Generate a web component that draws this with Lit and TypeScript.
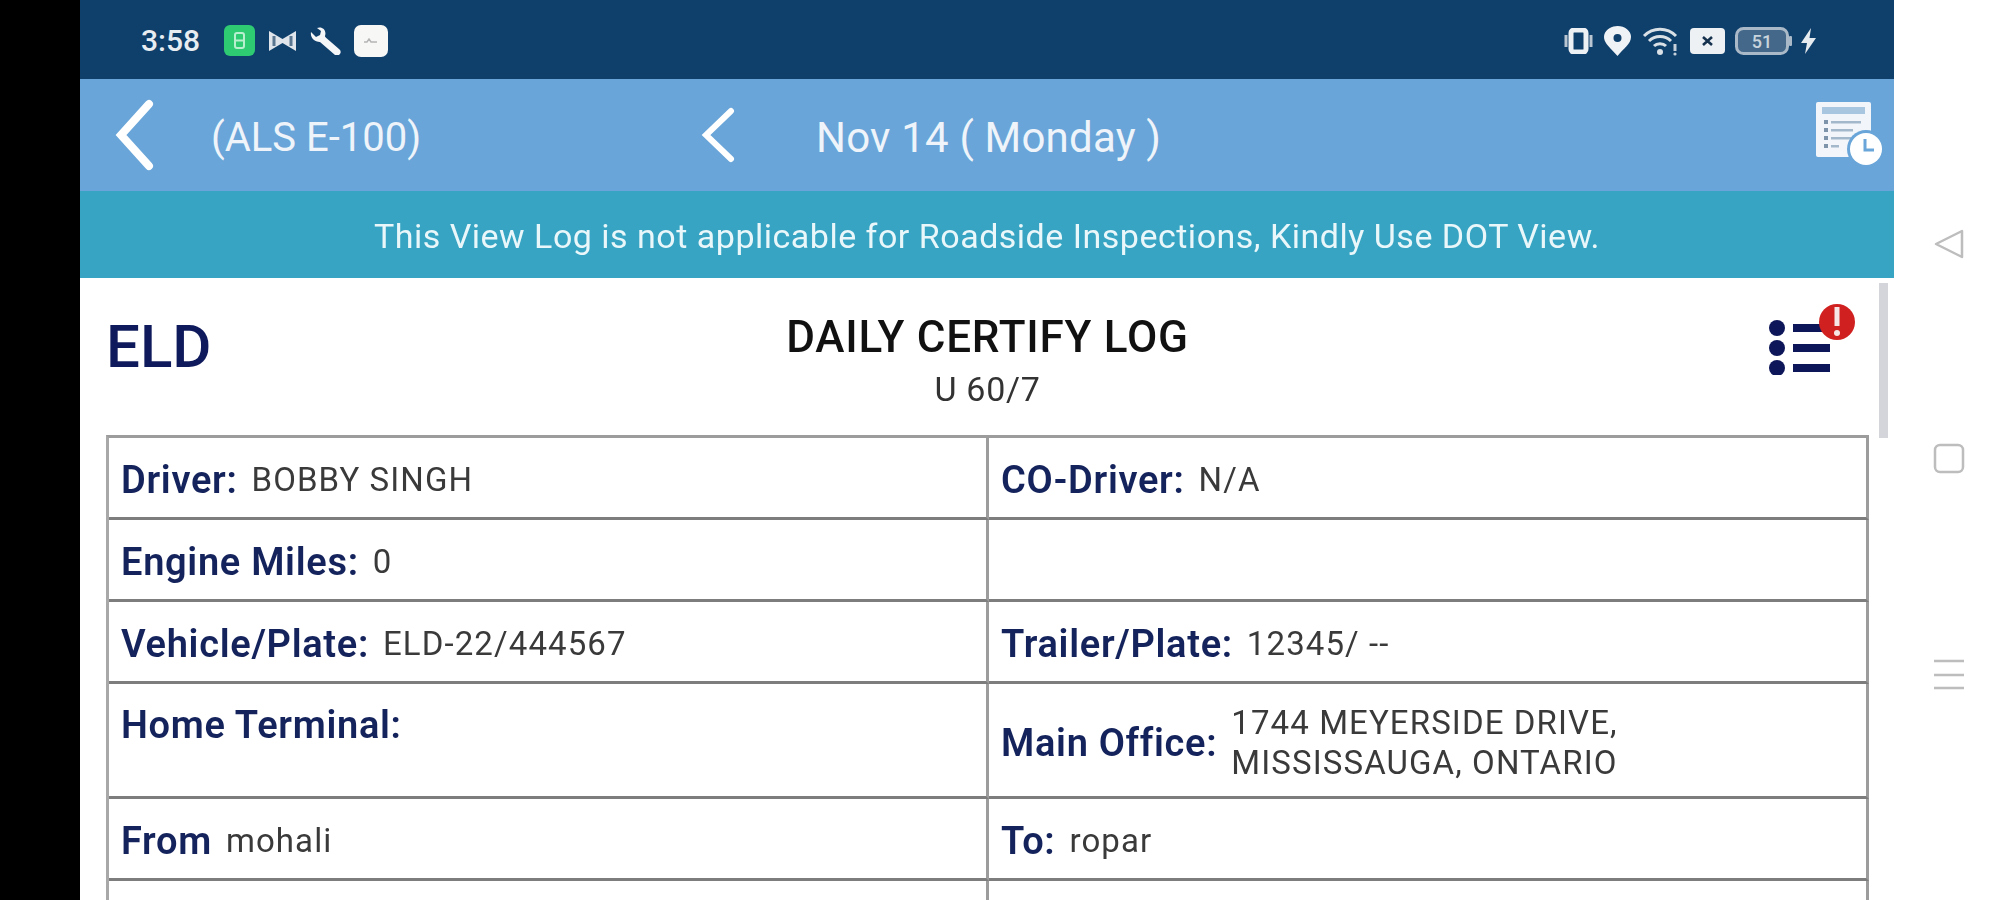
import { LitElement, html, css, svg } from 'lit';
import { customElement } from 'lit/decorators.js';

const chevron = (w: number, h: number, sw: number) => html`
  <svg width=${w} height=${h} viewBox="0 0 ${w} ${h}">
    <path d="M${w - sw / 2 - 1} ${sw / 2 + 1} L${sw} ${h / 2} L${w - sw / 2 - 1} ${h - sw / 2 - 1}"
      fill="none" stroke="#fff" stroke-width=${sw} stroke-linecap="round" stroke-linejoin="miter" />
  </svg>`;

const rows = [
  [{ k: 'Driver:', v: 'BOBBY SINGH' }, { k: 'CO-Driver:', v: 'N/A' }],
  [{ k: 'Engine Miles:', v: '0' }, null],
  [{ k: 'Vehicle/Plate:', v: 'ELD-22/444567' }, { k: 'Trailer/Plate:', v: '12345/ --' }],
  [{ k: 'Home Terminal:', v: '', top: true }, { k: 'Main Office:', v: '1744 MEYERSIDE DRIVE,\nMISSISSAUGA, ONTARIO' }],
  [{ k: 'From', v: 'mohali' }, { k: 'To:', v: 'ropar' }],
  [null, null],
];

@customElement('app-root')
export class AppRoot extends LitElement {
  static styles = css`
    :host {
      display: flex;
      width: 2003px;
      height: 900px;
      overflow: hidden;
      background: #fff;
      font-family: Roboto, "Liberation Sans", sans-serif;
    }
    .bezel { width: 80px; flex: none; background: #000; }
    .screen {
      width: 1814px;
      flex: none;
      position: relative;
      display: flex;
      flex-direction: column;
      filter: blur(0.5px);
    }
    .softkeys {
      flex: 1;
      display: flex;
      flex-direction: column;
      align-items: center;
      padding-top: 229px;
      gap: 184px;
      filter: blur(0.5px);
    }
    .softkeys svg { display: block; }

    .status {
      height: 79px;
      flex: none;
      background: #0f3f6b;
      display: flex;
      align-items: center;
      padding: 2px 77px 0 61px;
      box-sizing: border-box;
      color: #e8edf2;
    }
    .time { font-size: 30px; font-weight: 500; width: 83px; }
    .status svg { display: block; flex: none; }
    .left-icons, .right-icons { display: flex; align-items: center; gap: 13px; }
    .right-icons { margin-left: auto; gap: 10px; }
    .bolt { margin-left: -3px; }

    .header {
      height: 112px;
      flex: none;
      background: #69a5d8;
      display: grid;
      grid-template-columns: 131px 489px 116px 1fr auto;
      align-items: center;
      color: #eef4fa;
      padding-right: 10px;
    }
    .header svg { display: block; }
    .back { padding-left: 33px; }
    .title { font-size: 40px; padding-top: 4px; }
    .date { font-size: 42px; letter-spacing: 0.2px; grid-column: 4; padding-top: 4px; }
    .doc { overflow: visible; margin-top: 6px; }

    .banner {
      height: 87px;
      flex: none;
      background: #36a4c2;
      color: #e9f7fa;
      display: flex;
      align-items: center;
      justify-content: center;
      padding-top: 2px;
      box-sizing: border-box;
      font-size: 34px;
      letter-spacing: 0.5px;
    }

    .content { flex: 1; padding: 0 25px 0 26px; min-height: 0; }
    .top {
      height: 157px;
      display: grid;
      grid-template-columns: 1fr auto 1fr;
    }
    .eld {
      font-size: 60px;
      font-weight: 500;
      color: #0f1a5c;
      padding-top: 36px;
      line-height: 66px;
    }
    .heading { text-align: center; padding-top: 34px; color: #111; }
    .heading b { display: block; font-size: 44px; letter-spacing: 0.75px; font-weight: 500; line-height: 50px; }
    .heading span { display: block; font-size: 34px; letter-spacing: 0.7px; line-height: 38px; margin-top: 8px; color: #333; }
    .list { justify-self: end; padding: 21px 0 0 0; margin-right: 14px; }
    .list svg { display: block; }

    .table {
      display: grid;
      grid-template-columns: 880px 1fr;
      border-top: 3px solid #9c9c9c;
      border-left: 3px solid #a8a8a8;
    }
    .cell {
      display: flex;
      align-items: center;
      gap: 14px;
      height: 82px;
      box-sizing: border-box;
      padding: 5px 12px 0;
      border-right: 3px solid #9c9c9c;
      border-bottom: 3px solid #7d7d7d;
    }
    .cell.tall { height: 115px; }
    .cell.top-align { align-items: flex-start; padding-top: 19px; }
    .key { font-size: 38px; letter-spacing: 0.7px; font-weight: 600; color: #14235c; white-space: nowrap; }
    .val { font-size: 33px; letter-spacing: 1.1px; color: #3a3a3a; white-space: pre-line; line-height: 40px; }

    .scrollbar {
      position: absolute;
      left: 1799px;
      top: 283px;
      width: 9px;
      height: 155px;
      background: #d3d5db;
    }
  `;

  private renderCell(c: { k: string; v: string; top?: boolean } | null, tall: boolean) {
    return html`<div class="cell ${tall ? 'tall' : ''} ${c?.top ? 'top-align' : ''}">
      ${c ? html`<span class="key">${c.k}</span><span class="val">${c.v}</span>` : ''}
    </div>`;
  }

  render() {
    return html`
      <div class="bezel"></div>
      <div class="screen">
        <div class="status">
          <div class="time">3:58</div>
          <div class="left-icons">
            <svg width="31" height="31" viewBox="0 0 31 31">
              <rect width="31" height="31" rx="6" fill="#2ecb73" />
              <rect x="11" y="8" width="9" height="15" rx="2" fill="none" stroke="#b8f0cf" stroke-width="2" />
              <path d="M11 15.5h9" stroke="#b8f0cf" stroke-width="2" />
            </svg>
            <svg width="29" height="24" viewBox="0 0 29 24">
              <path d="M1 2 L14.5 10 L28 2 V22 L14.5 14 L1 22Z" fill="#dfe5ea" />
              <path d="M6 7v10M23 7v10" stroke="#5a7690" stroke-width="3" />
            </svg>
            <svg width="31" height="28" viewBox="0 0 31 28">
              <path d="M12 12 L27 25" stroke="#f4f6f8" stroke-width="7" stroke-linecap="round" />
              <path d="M1 5 L6 10 L10 8 L11 4 L7 1 C12 -1 17 3 15 9 L16 15 L10 15 C4 15 0 10 1 5Z" fill="#f4f6f8" />
            </svg>
            <svg width="34" height="32" viewBox="0 0 34 32">
              <rect width="34" height="32" rx="7" fill="#f7f7f5" />
              <path d="M10 17h3l2-3 2 3h6" stroke="#b5b5b5" stroke-width="1.5" fill="none" />
            </svg>
          </div>
          <div class="right-icons">
            <svg width="29" height="26" viewBox="0 0 29 26">
              <rect x="7" y="2" width="15" height="22" rx="3" fill="#0f3f6b" stroke="#eef1f4" stroke-width="5" />
              <path d="M2 7v12M27 7v12" stroke="#b9c6d2" stroke-width="3" />
            </svg>
            <svg width="29" height="30" viewBox="0 0 29 30">
              <path d="M14.5 30 C9 23 1 18 1 11 A13.5 11 0 0 1 28 11 C28 18 20 23 14.5 30Z" fill="#f0f3f6" />
              <circle cx="14.5" cy="12" r="4" fill="#0f3f6b" />
            </svg>
            <svg width="38" height="30" viewBox="0 0 38 30">
              <path d="M2 10 C11 1 25 1 34 10 M7 15 C13 9 23 9 29 15 M12 20 C15 17 21 17 24 20" fill="none" stroke="#d9e0e6" stroke-width="3" />
              <circle cx="18" cy="26" r="3" fill="#d9e0e6" />
              <path d="M33 18v7" stroke="#c5d0da" stroke-width="3" />
              <circle cx="33" cy="28" r="1.6" fill="#c5d0da" />
            </svg>
            <svg width="35" height="26" viewBox="0 0 35 26">
              <rect width="35" height="26" rx="4" fill="#eef1f4" />
              <path d="M13 9l9 8M22 9l-9 8" stroke="#16324f" stroke-width="2.6" />
            </svg>
            <svg width="58" height="28" viewBox="0 0 58 28">
              <rect x="1.5" y="1.5" width="51" height="25" rx="7" fill="#44688a" stroke="#a9b9c7" stroke-width="3" />
              <rect x="54" y="9" width="3" height="10" rx="1" fill="#a9b9c7" />
              <text x="27" y="21" font-family="Roboto" font-size="18" font-weight="500" text-anchor="middle" fill="#c9d4dd">51</text>
            </svg>
            <svg class="bolt" width="17" height="26" viewBox="0 0 17 26">
              <path d="M11 0 L1 15 H7 L5 26 L16 10 H9.5Z" fill="#e6ebf0" />
            </svg>
          </div>
        </div>

        <div class="header">
          <div class="back">${chevron(41, 72, 8)}</div>
          <div class="title">(ALS E-100)</div>
          <div>${chevron(35, 56, 6)}</div>
          <div class="date">Nov 14 ( Monday )</div>
          <svg class="doc" width="68" height="72" viewBox="0 0 68 72">
            <rect x="0" y="0" width="55" height="55" rx="2" fill="#f2f6fa" />
            <rect x="6" y="5" width="43" height="7" fill="#a9c6e0" />
            ${[20, 28, 36, 44].map(
              (y, i) => svg`<rect x="8" y=${y - 2} width="4" height="4" fill="#7d94aa" />
              <rect x="15" y=${y - 1} width=${[30, 22, 20, 8][i]} height="2.5" fill="#a4b8cb" />`
            )}
            <circle cx="50" cy="47" r="19" fill="#69a5d8" />
            <circle cx="50" cy="47" r="16" fill="#fff" />
            <path d="M49 37v11h9" fill="none" stroke="#69a5d8" stroke-width="3" />
          </svg>
        </div>

        <div class="banner">This View Log is not applicable for Roadside Inspections, Kindly Use DOT View.</div>

        <div class="content">
          <div class="top">
            <div class="eld">ELD</div>
            <div class="heading">
              <b>DAILY CERTIFY LOG</b>
              <span>U 60/7</span>
            </div>
            <div class="list">
              <svg width="86" height="76" viewBox="0 0 86 76">
                <g fill="#0d1659">
                  <circle cx="8" cy="29" r="8" /><circle cx="8" cy="49" r="8" /><circle cx="8" cy="69" r="8" />
                  <rect x="24" y="25" width="37" height="8" /><rect x="24" y="45" width="37" height="8" /><rect x="24" y="65" width="37" height="8" />
                </g>
                <circle cx="68" cy="23" r="18" fill="#d0201f" />
                <path d="M68 8v19" stroke="#f6e6e6" stroke-width="5" />
                <circle cx="68" cy="34" r="3" fill="#f6e6e6" />
              </svg>
            </div>
          </div>

          <div class="table">
            ${rows.map((r, i) => r.map(c => this.renderCell(c, i === 3)))}
          </div>
        </div>
        <div class="scrollbar"></div>
      </div>
      <div class="softkeys">
        <svg width="32" height="30" viewBox="0 0 32 30">
          <path d="M29 2 V28 L3 15Z" fill="none" stroke="#bdbdbd" stroke-width="2.5" stroke-linejoin="round" />
        </svg>
        <svg width="32" height="31" viewBox="0 0 32 31">
          <rect x="2" y="2" width="28" height="27" rx="5" fill="none" stroke="#bdbdbd" stroke-width="2.5" />
        </svg>
        <svg width="32" height="34" viewBox="0 0 32 34">
          <path d="M1 3h30M1 17h30M1 30h30" stroke="#bdbdbd" stroke-width="2.5" />
        </svg>
      </div>
    `;
  }
}
